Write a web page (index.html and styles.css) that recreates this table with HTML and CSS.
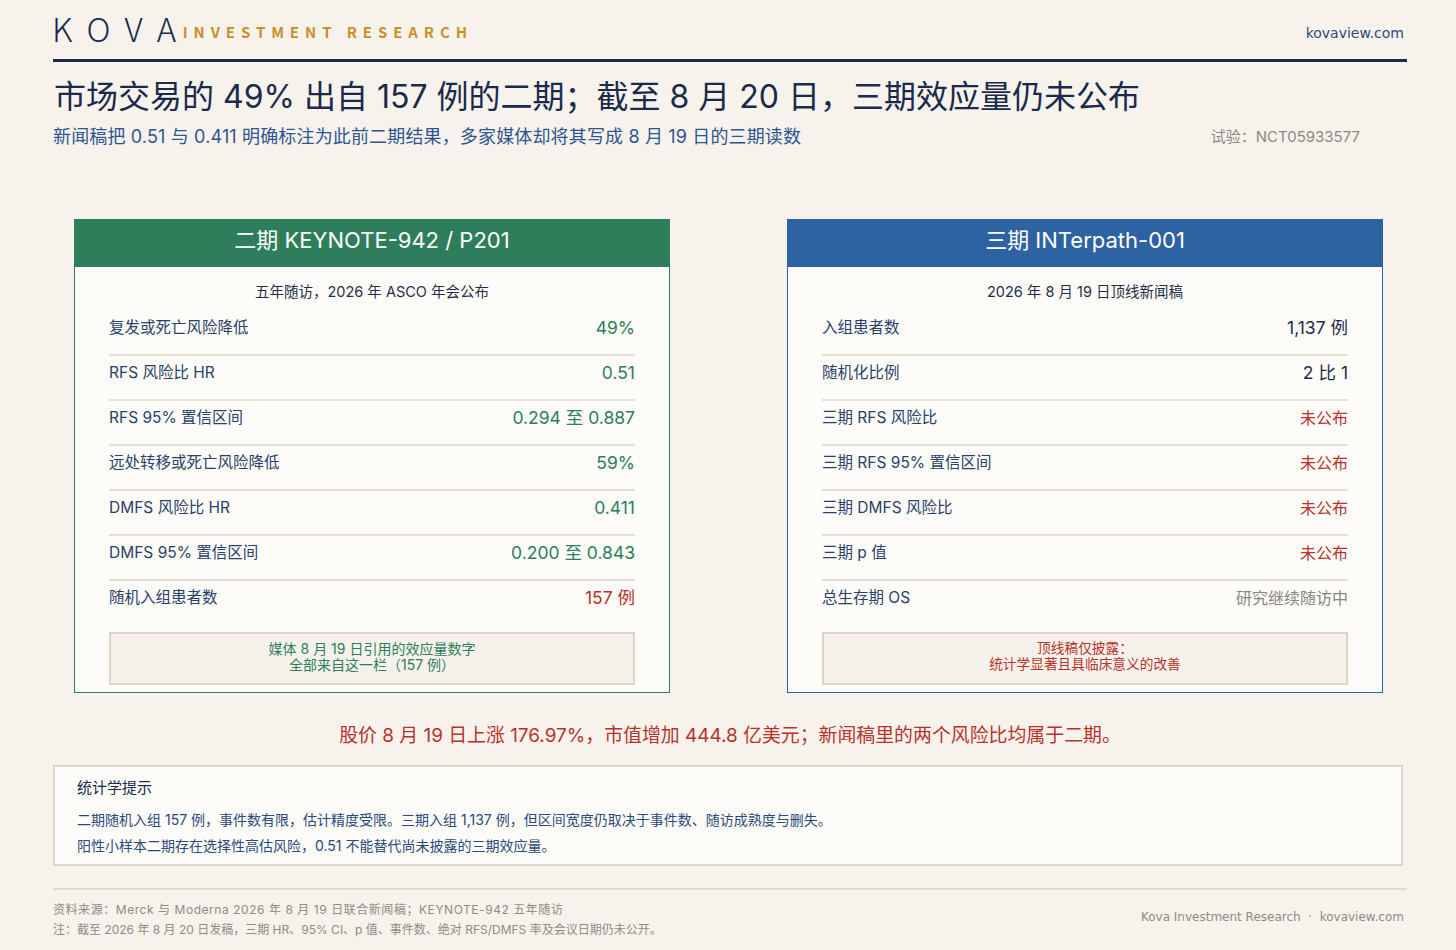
FILE: index.html
```html
<!DOCTYPE html>
<html lang="zh-CN">
<head>
<meta charset="utf-8">
<title>Kova Investment Research</title>
<link rel="stylesheet" href="styles.css">
</head>
<body>
<div class="page">
  <header class="masthead">
    <div class="brand">
      <span class="kova">KOVA</span>
      <span class="ir">INVESTMENT RESEARCH</span>
    </div>
    <div class="site">kovaview.com</div>
  </header>

  <h1 class="title">市场交易的 49% 出自 157 例的二期；截至 8 月 20 日，三期效应量仍未公布</h1>
  <div class="subline">
    <p class="subtitle">新闻稿把 0.51 与 0.411 明确标注为此前二期结果，多家媒体却将其写成 8 月 19 日的三期读数</p>
    <p class="trial">试验：NCT05933577</p>
  </div>

  <div class="cards">
    <section class="card green">
      <h2 class="card-head">二期 KEYNOTE-942 / P201</h2>
      <div class="card-body">
        <p class="card-sub">五年随访，2026 年 ASCO 年会公布</p>
        <div class="row"><span class="lab">复发或死亡风险降低</span><span class="val v-green">49%</span></div>
        <div class="row"><span class="lab">RFS 风险比 HR</span><span class="val v-green">0.51</span></div>
        <div class="row"><span class="lab">RFS 95% 置信区间</span><span class="val v-green">0.294 至 0.887</span></div>
        <div class="row"><span class="lab">远处转移或死亡风险降低</span><span class="val v-green">59%</span></div>
        <div class="row"><span class="lab">DMFS 风险比 HR</span><span class="val v-green">0.411</span></div>
        <div class="row"><span class="lab">DMFS 95% 置信区间</span><span class="val v-green">0.200 至 0.843</span></div>
        <div class="row last"><span class="lab">随机入组患者数</span><span class="val v-red">157 例</span></div>
        <div class="note n-green">媒体 8 月 19 日引用的效应量数字<br>全部来自这一栏（157 例）</div>
      </div>
    </section>

    <section class="card blue">
      <h2 class="card-head">三期 INTerpath-001</h2>
      <div class="card-body">
        <p class="card-sub">2026 年 8 月 19 日顶线新闻稿</p>
        <div class="row"><span class="lab">入组患者数</span><span class="val v-navy">1,137 例</span></div>
        <div class="row"><span class="lab">随机化比例</span><span class="val v-navy">2 比 1</span></div>
        <div class="row"><span class="lab">三期 RFS 风险比</span><span class="val v-red sm">未公布</span></div>
        <div class="row"><span class="lab">三期 RFS 95% 置信区间</span><span class="val v-red sm">未公布</span></div>
        <div class="row"><span class="lab">三期 DMFS 风险比</span><span class="val v-red sm">未公布</span></div>
        <div class="row"><span class="lab">三期 p 值</span><span class="val v-red sm">未公布</span></div>
        <div class="row last"><span class="lab">总生存期 OS</span><span class="val v-gray sm">研究继续随访中</span></div>
        <div class="note n-red sm">顶线稿仅披露：<br>统计学显著且具临床意义的改善</div>
      </div>
    </section>
  </div>

  <p class="alert">股价 8 月 19 日上涨 176.97%，市值增加 444.8 亿美元；新闻稿里的两个风险比均属于二期。</p>

  <section class="stats">
    <h3 class="stats-title">统计学提示</h3>
    <p class="stats-line">二期随机入组 157 例，事件数有限，估计精度受限。三期入组 1,137 例，但区间宽度仍取决于事件数、随访成熟度与删失。</p>
    <p class="stats-line">阳性小样本二期存在选择性高估风险，0.51 不能替代尚未披露的三期效应量。</p>
  </section>

  <footer class="foot">
    <div class="foot-left">
      <p class="src">资料来源：Merck 与 Moderna 2026 年 8 月 19 日联合新闻稿；KEYNOTE-942 五年随访</p>
      <p>注：截至 2026 年 8 月 20 日发稿，三期 HR、95% CI、p 值、事件数、绝对 RFS/DMFS 率及会议日期仍未公开。</p>
    </div>
    <div class="foot-right">Kova Investment Research &nbsp;·&nbsp; kovaview.com</div>
  </footer>
</div>
</body>
</html>
```

FILE: styles.css
```css
* { box-sizing: border-box; }
html, body { margin: 0; padding: 0; }
body {
  background: #f7f3ec;
  font-family: Inter, "Noto Sans CJK SC", sans-serif;
  color: #1b2a4a;
}
p, h1, h2, h3 { margin: 0; font-weight: 400; }

.page {
  width: 1354px;
  margin-left: 53px;
}

.masthead {
  height: 62px;
  border-bottom: 3px solid #1b2a4a;
  display: flex;
  justify-content: space-between;
  align-items: center;
  padding-bottom: 2px;
}
.brand { display: flex; align-items: center; }
.kova {
  font-family: "Noto Sans CJK SC", sans-serif;
  font-size: 33px;
  font-weight: 300;
  letter-spacing: 14.5px;
  color: #1b2a4a;
  line-height: 1;
  margin-left: -1px;
}
.ir {
  font-family: "Noto Sans CJK SC", sans-serif;
  font-size: 15px;
  font-weight: 700;
  line-height: 1;
  letter-spacing: 5.9px;
  color: #c8902a;
  margin-left: -8px;
  margin-top: 5px;
}
.site {
  font-family: "DejaVu Sans", sans-serif;
  font-size: 14px;
  color: #2c4a7a;
  margin-right: 3px;
  margin-top: 8px;
}

.title {
  margin-top: 15px;
  font-size: 32px;
  line-height: 40px;
  color: #1b2a4a;
  padding-left: 1px;
}
.subline {
  margin-top: 8px;
  display: flex;
  justify-content: space-between;
  align-items: center;
  padding-right: 47px;
}
.subtitle {
  font-size: 18px;
  line-height: 24px;
  letter-spacing: 0.15px;
  color: #2f5590;
}
.trial {
  font-size: 15px;
  line-height: 24px;
  color: #8c8984;
}

.cards {
  margin-top: 70px;
  display: flex;
  justify-content: space-between;
  padding: 0 24px 0 21px;
}
.card {
  width: 596px;
  background: #fdfcf8;
  border: 1.5px solid;
}
.card.green { border-color: #2e7d5b; }
.card.blue { border-color: #2d62a3; }
.card-head {
  height: 47px;
  line-height: 41px;
  text-align: center;
  color: #ffffff;
  font-size: 22px;
}
.green .card-head { background: #2e7d5b; }
.blue .card-head { background: #2d62a3; }

.card-body {
  padding: 15px 34px 7px 34px;
}
.card-sub {
  font-size: 14.5px;
  line-height: 20px;
  text-align: center;
  color: #1f2d4a;
  margin-bottom: 9px;
}
.row {
  display: flex;
  justify-content: space-between;
  align-items: center;
  height: 45px;
  padding: 5px 0 14px;
  border-bottom: 2px solid #e6dfd3;
}
.row.last {
  border-bottom: none;
  height: 43px;
  padding-top: 5px;
  margin-bottom: 8px;
}
.lab {
  font-size: 15.5px;
  line-height: 24px;
  color: #2a3f6a;
}
.val {
  font-size: 17.5px;
  line-height: 24px;
}
.val.sm { font-size: 16px; }
.v-green { color: #2e7d5b; }
.v-red { color: #b8322b; }
.v-navy { color: #1f2d4a; }
.v-gray { color: #8a8580; }

.note {
  background: #f6f2eb;
  border: 2px solid #ddd5c5;
  height: 53px;
  padding-top: 7px;
  text-align: center;
  font-size: 14px;
  line-height: 15.5px;
}
.note.sm { font-size: 13.7px; }
.n-green { color: #2e7d5b; }
.n-red { color: #b8322b; }

.alert {
  margin-top: 30px;
  text-align: center;
  font-size: 18.9px;
  line-height: 26px;
  color: #b8322b;
}

.stats {
  margin-top: 16px;
  width: 1350px;
  background: #fdfcf8;
  border: 2px solid #ddd5c5;
  padding: 10px 22px 4px;
  height: 101px;
}
.stats-title {
  font-size: 15px;
  line-height: 22px;
  color: #1b2a4a;
  margin-bottom: 8px;
}
.stats-line {
  font-size: 14px;
  line-height: 26px;
  color: #2a4a7a;
}

.foot {
  margin-top: 22px;
  border-top: 2px solid #e2dacb;
  padding-top: 10px;
  display: flex;
  justify-content: space-between;
  align-items: center;
}
.foot-left p {
  font-size: 12px;
  line-height: 20px;
  color: #8f8a85;
}
.foot-left .src { letter-spacing: 0.55px; }
.foot-right {
  font-family: "DejaVu Sans", sans-serif;
  font-size: 12px;
  color: #8f8a85;
  margin-right: 3px;
  margin-bottom: 7px;
}
```
